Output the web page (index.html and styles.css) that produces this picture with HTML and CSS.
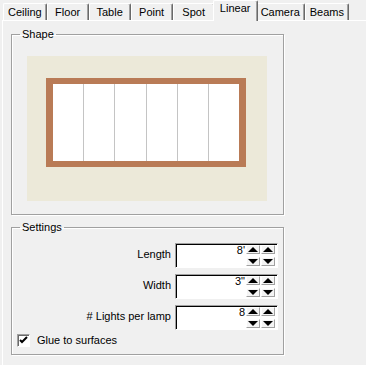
FILE: index.html
```html
<!DOCTYPE html>
<html lang="en">
<head>
    <meta charset="UTF-8">
    <title>Light Properties</title>
    <link rel="stylesheet" href="styles.css">
</head>
<body>
    <div class="tabs">
        <div class="tab">Ceiling</div>
        <div class="tab">Floor</div>
        <div class="tab">Table</div>
        <div class="tab">Point</div>
        <div class="tab">Spot</div>
        <div class="tab active">Linear</div>
        <div class="tab">Camera</div>
        <div class="tab">Beams</div>
    </div>

    <div class="page">
        <fieldset class="group">
            <legend>Shape</legend>
            <div class="shape-body">
                <div class="canvas">
                    <div class="lamp">
                        <div class="cell"></div>
                        <div class="cell"></div>
                        <div class="cell"></div>
                        <div class="cell"></div>
                        <div class="cell"></div>
                        <div class="cell"></div>
                    </div>
                </div>
            </div>
        </fieldset>

        <fieldset class="group settings">
            <legend>Settings</legend>
            <div class="settings-body">
                <div class="rows">
                    <label class="row-label">Length</label>
                    <div class="field">
                        <span class="value">8'</span>
                        <div class="spin">
                            <button class="up"></button>
                            <button class="up"></button>
                            <button class="down"></button>
                            <button class="down"></button>
                        </div>
                    </div>

                    <label class="row-label">Width</label>
                    <div class="field">
                        <span class="value">3"</span>
                        <div class="spin">
                            <button class="up"></button>
                            <button class="up"></button>
                            <button class="down"></button>
                            <button class="down"></button>
                        </div>
                    </div>

                    <label class="row-label"># Lights per lamp</label>
                    <div class="field">
                        <span class="value">8</span>
                        <div class="spin">
                            <button class="up"></button>
                            <button class="up"></button>
                            <button class="down"></button>
                            <button class="down"></button>
                        </div>
                    </div>
                </div>

                <div class="check-row">
                    <span class="checkbox">
                        <svg width="9" height="9" viewBox="0 0 9 9">
                            <path d="M1 4 L3 6 L8 1" fill="none" stroke="#000" stroke-width="2"/>
                        </svg>
                    </span>
                    <span>Glue to surfaces</span>
                </div>
            </div>
        </fieldset>
    </div>
</body>
</html>
```

FILE: styles.css
```css
* {
    margin: 0;
    padding: 0;
    box-sizing: border-box;
}

body {
    font-family: 'Liberation Sans', Arial, sans-serif;
    font-size: 11px;
    color: #000;
    background: #f0f0f0;
    width: 366px;
    height: 365px;
    overflow: hidden;
}

/* tab strip */
.tabs {
    display: flex;
    align-items: flex-end;
    height: 20px;
    padding-left: 3px;
}

.tab {
    height: 17px;
    min-width: 42px;
    padding: 0 4px;
    line-height: 16px;
    text-align: center;
    border-top: 1px solid #fff;
    border-left: 1px solid #fff;
    border-right: 1px solid #696969;
    box-shadow: inset -1px 0 0 #a0a0a0;
    border-radius: 2px 2px 0 0;
    background: #f0f0f0;
}

.tab.active {
    height: 21px;
    margin: 0 -1px -1px -2px;
    padding: 0 5px;
    line-height: 14px;
    position: relative;
    min-width: 45px;
}

.tab.active + .tab {
    margin-left: -1px;
}

/* tab page */
.page {
    margin-left: 2px;
    border-top: 1px solid #fff;
    border-left: 1px solid #fff;
    padding: 6px 0 0 8px;
    height: 345px;
}

.group {
    width: 273px;
    border: 1px solid #a0a0a0;
    box-shadow: inset 1px 1px 0 #fff, 1px 1px 0 #fff;
    padding: 0;
}

.group legend {
    margin-left: 8px;
    padding: 0 2px;
    line-height: 14px;
}

.shape-body {
    padding: 15px 15px 13px;
}

.canvas {
    width: 240px;
    height: 145px;
    background: #ece9d9;
    padding: 22px 0 0 19px;
}

.lamp {
    width: 200px;
    height: 89px;
    border: solid #b97b56;
    border-width: 6px 7px;
    background: #fff;
    display: flex;
}

.cell {
    flex: 1;
}

.cell + .cell {
    border-left: 1px solid #c4c4c4;
}

.settings {
    margin-top: 5px;
}

.settings-body {
    padding: 9px 5px 7px 5px;
}

.rows {
    display: grid;
    grid-template-columns: 1fr 103px;
    grid-auto-rows: 25px;
    column-gap: 4px;
    row-gap: 6px;
}

.row-label {
    text-align: right;
    line-height: 23px;
}

.field {
    display: flex;
    border: 1px solid;
    border-color: #a0a0a0 #fff #fff #a0a0a0;
    box-shadow: inset 1px 1px 0 #000;
    background: #fff;
    padding: 1px 1px 0 1px;
}

.value {
    flex: 1;
    text-align: right;
    line-height: 11px;
    padding-right: 1px;
}

.spin {
    display: grid;
    grid-template-columns: 14px 14px;
    grid-template-rows: 9px 9px;
    column-gap: 1px;
    row-gap: 3px;
    margin-right: 1px;
}

.spin button {
    display: flex;
    align-items: center;
    justify-content: center;
    border: 1px solid;
    border-color: #fff #a0a0a0 #a0a0a0 #fff;
    background: #f4f4f4;
}

.spin button::after {
    content: '';
    border-left: 5px solid transparent;
    border-right: 5px solid transparent;
}

.spin .up::after {
    border-bottom: 5px solid #000;
}

.spin .down::after {
    border-top: 5px solid #000;
}

.check-row {
    display: flex;
    align-items: center;
    margin-top: 3px;
    height: 14px;
}

.checkbox {
    width: 13px;
    height: 13px;
    display: flex;
    align-items: center;
    justify-content: center;
    background: #fff;
    border: 1px solid;
    border-color: #a0a0a0 #fff #fff #a0a0a0;
    box-shadow: inset 1px 1px 0 #696969;
    margin-right: 7px;
}
```
